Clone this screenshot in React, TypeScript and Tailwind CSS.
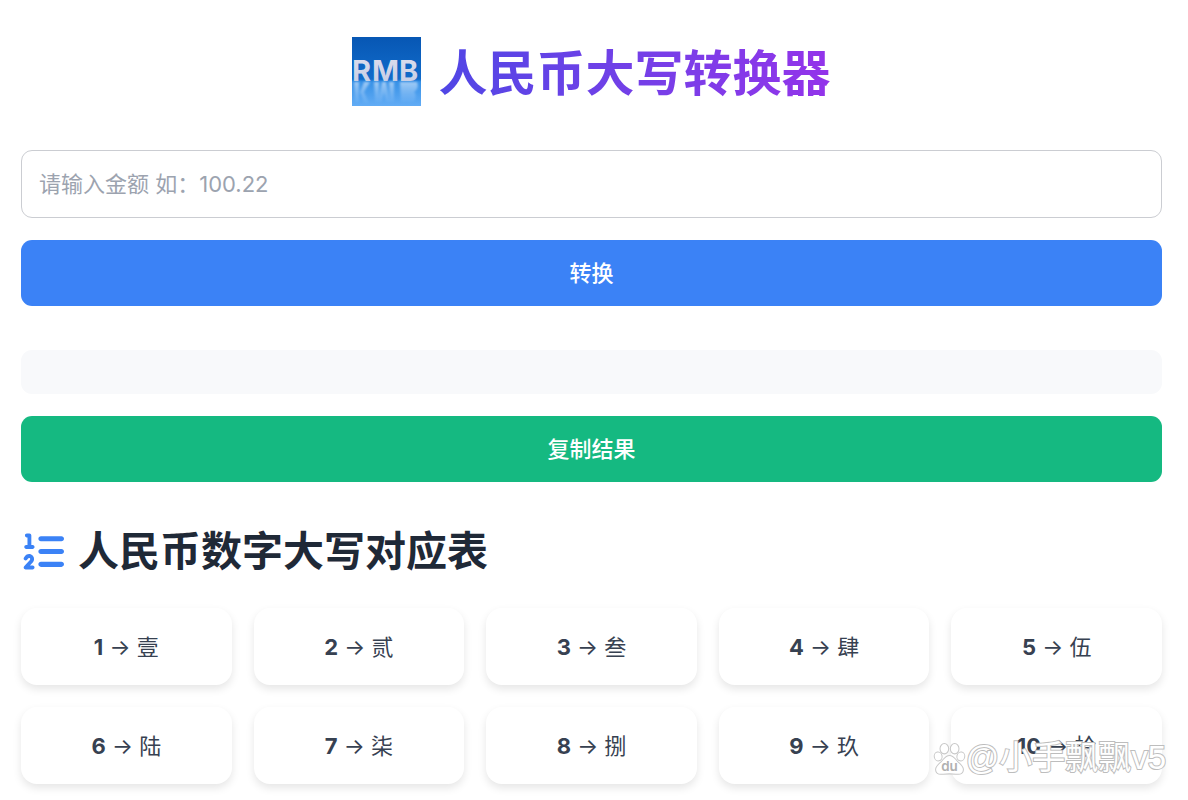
import { useState } from 'react';
import type { FormEvent } from 'react';
import { FaListOl } from 'react-icons/fa6';

const numerals = [
  { value: 1, label: '壹' },
  { value: 2, label: '贰' },
  { value: 3, label: '叁' },
  { value: 4, label: '肆' },
  { value: 5, label: '伍' },
  { value: 6, label: '陆' },
  { value: 7, label: '柒' },
  { value: 8, label: '捌' },
  { value: 9, label: '玖' },
  { value: 10, label: '拾' },
];

const DIGITS = '零壹贰叁肆伍陆柒捌玖';
const UNITS = ['', '拾', '佰', '仟'];
const SECTIONS = ['', '万', '亿', '万亿'];

function toCapital(input: string) {
  const amount = Number(input);
  if (!input.trim() || Number.isNaN(amount) || amount < 0 || amount >= 1e13) return '';

  const [yuan, cents] = amount.toFixed(2).split('.');
  let result = '';
  let zero = false;
  let sectionHasDigit = false;

  for (let i = 0; i < yuan.length; i++) {
    const pos = yuan.length - 1 - i;
    const digit = Number(yuan[i]);
    if (digit === 0) {
      zero = true;
    } else {
      if (zero && result) result += '零';
      zero = false;
      sectionHasDigit = true;
      result += DIGITS[digit] + UNITS[pos % 4];
    }
    if (pos % 4 === 0) {
      if (sectionHasDigit) result += SECTIONS[pos / 4];
      sectionHasDigit = false;
    }
  }

  if (result) result += '元';
  const jiao = Number(cents[0]);
  const fen = Number(cents[1]);
  if (!jiao && !fen) return (result || '零元') + '整';
  if (jiao) result += DIGITS[jiao] + '角';
  else if (result) result += '零';
  if (fen) result += DIGITS[fen] + '分';
  return result;
}

export default function App() {
  const [amount, setAmount] = useState('');
  const [result, setResult] = useState('');

  const handleSubmit = (e: FormEvent) => {
    e.preventDefault();
    setResult(toCapital(amount));
  };

  const handleCopy = () => {
    if (result) navigator.clipboard?.writeText(result);
  };

  return (
    <div className="relative min-h-screen bg-white pl-[21px] pr-[26px] pt-[37px] pb-4 text-[22px] leading-[34px] text-[#374151] font-[Inter,'Noto_Sans_CJK_SC',sans-serif]">
      <header className="flex items-start justify-center gap-[17px] mb-10">
        <RmbLogo />
        <h1 className="text-[49px] leading-[73px] font-bold bg-gradient-to-r from-[#4f46e5] to-[#9333ea] bg-clip-text text-transparent">
          人民币大写转换器
        </h1>
      </header>

      <main>
        <form onSubmit={handleSubmit} className="flex flex-col gap-[22px]">
          <input
            type="text"
            inputMode="decimal"
            aria-label="金额"
            placeholder="请输入金额 如：100.22"
            value={amount}
            onChange={(e) => setAmount(e.target.value)}
            className="w-full rounded-[11px] border border-[#cbcdd2] px-[17px] py-4 text-[#1f2937] placeholder:text-[#9ca3af] outline-none focus:border-blue-500"
          />
          <button type="submit" className="w-full rounded-[11px] bg-[#3b82f6] py-4 font-medium text-white hover:bg-blue-600">
            转换
          </button>
        </form>

        <output className="block mt-11 mb-[22px] min-h-11 rounded-[11px] bg-[#f8f9fb] px-4 py-1 text-center">{result}</output>

        <button type="button" onClick={handleCopy} className="w-full rounded-[11px] bg-[#15b981] py-4 font-medium text-white hover:bg-emerald-600">
          复制结果
        </button>

        <section className="mt-10">
          <h2 className="flex items-center gap-[14px] pl-[2px] mb-7 text-[41px] leading-[58px] font-bold text-[#1f2937]">
            <FaListOl className="size-[41px] text-[#3b82f6]" aria-hidden="true" />
            人民币数字大写对应表
          </h2>
          <ul className="grid grid-cols-5 gap-[22px]">
            {numerals.map((item) => (
              <li key={item.value} className="rounded-2xl bg-white pt-[22px] pb-[21px] text-center shadow-[0_4px_8px_rgba(0,0,0,0.1)]">
                <strong className="font-bold">{item.value}</strong> → {item.label}
              </li>
            ))}
          </ul>
        </section>
      </main>

      <Watermark />
    </div>
  );
}

function RmbLogo() {
  return (
    <svg className="size-[69px] shrink-0" viewBox="0 0 69 69" role="img" aria-label="RMB">
      <defs>
        <linearGradient id="sky" x1="0" y1="0" x2="0" y2="1">
          <stop offset="0" stopColor="#0757b4" />
          <stop offset="0.61" stopColor="#116bca" />
          <stop offset="0.65" stopColor="#3791e6" />
          <stop offset="1" stopColor="#62acf5" />
        </linearGradient>
        <linearGradient id="letters" x1="0" y1="0" x2="0" y2="1">
          <stop offset="0" stopColor="#dedfee" />
          <stop offset="1" stopColor="#c3cbe3" />
        </linearGradient>
        <linearGradient id="mirror" x1="0" y1="0" x2="0" y2="1">
          <stop offset="0" stopColor="#c5dffb" stopOpacity="0.75" />
          <stop offset="1" stopColor="#a8d0fa" stopOpacity="0.1" />
        </linearGradient>
        <filter id="soft" x="-20%" y="-20%" width="140%" height="140%">
          <feGaussianBlur stdDeviation="1.1" />
        </filter>
      </defs>
      <rect width="69" height="69" fill="url(#sky)" />
      {/* reflection on the floor */}
      <g fill="url(#mirror)" filter="url(#soft)">
        <path d="M2 45h5v20H3zM12 45h6l-6 10 5 11h-5l-4-11z" />
        <path d="M22 45h5v20h-4zM37 45h5v20h-4zM30 45h4l4 20h-4l-2-9-2 9h-4z" />
        <path d="M48 45h17c2 5 0 8-3 10 3 2 2 10-2 10H49z" />
      </g>
      <g fill="url(#letters)" fontFamily="Inter, sans-serif" fontWeight="700" fontSize="29">
        <text x="0" y="44">R</text>
        <text x="20" y="44">M</text>
        <text x="47" y="44">B</text>
      </g>
    </svg>
  );
}

function Watermark() {
  return (
    <div className="pointer-events-none absolute right-[22px] top-[740px] flex items-center">
      <svg className="size-[33px]" viewBox="0 0 32 32" aria-hidden="true">
        <g fill="#fff" stroke="#c8c8c8" strokeWidth="1">
          <ellipse cx="5" cy="14" rx="3.800" ry="4.300" transform="rotate(-12 5 14)" />
          <ellipse cx="11" cy="6.500" rx="4.200" ry="5" />
          <ellipse cx="21" cy="6.500" rx="4.200" ry="5" />
          <ellipse cx="27" cy="14" rx="3.800" ry="4.300" transform="rotate(12 27 14)" />
          <path d="M16 13c-4 0-5.500 3.500-8 6-3 3-5.500 4.500-5.500 8 0 3 2.500 4.500 5.500 4.300 3-.2 5-.4 8-.4s5 .2 8 .4c3 .2 5.500-1.300 5.500-4.300 0-3.500-2.500-5-5.500-8C21.500 16.500 20 13 16 13z" />
        </g>
        <text x="16" y="28" textAnchor="middle" fontFamily="Inter, sans-serif" fontSize="13" fontWeight="600" fill="#b0b0b0">du</text>
      </svg>
      <span className="text-[33px] leading-9 text-white [-webkit-text-stroke:2px_#bdbdbd] [paint-order:stroke_fill] font-['Liberation_Sans','Noto_Sans_CJK_SC',sans-serif]">
        @小手飘飘v5
      </span>
    </div>
  );
}
